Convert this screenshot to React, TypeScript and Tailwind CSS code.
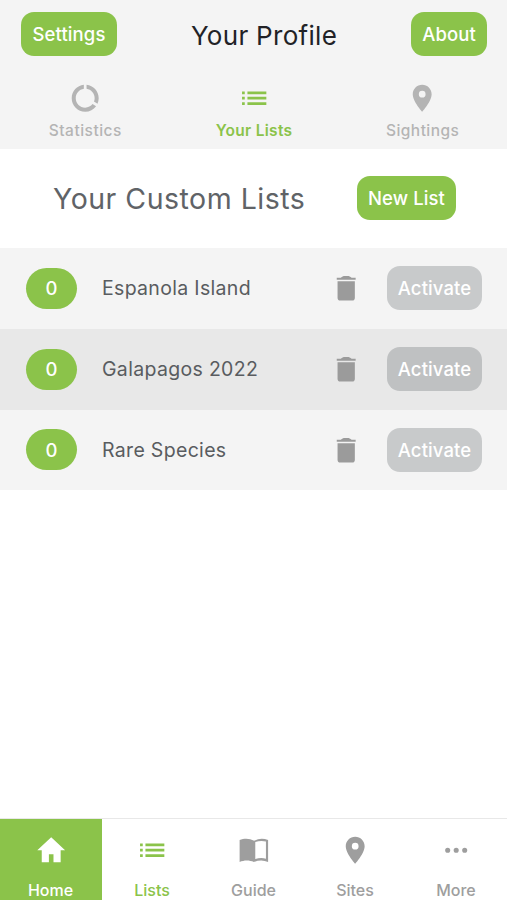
import React from "react";

const paths = {
  usage:
    "M13 2.05v3.03c3.39.49 6 3.39 6 6.92 0 .9-.18 1.75-.48 2.54l2.6 1.53c.56-1.24.88-2.62.88-4.07 0-5.18-3.95-9.45-9-9.95zM12 19c-3.87 0-7-3.13-7-7 0-3.53 2.61-6.43 6-6.92V2.05c-5.06.5-9 4.76-9 9.95 0 5.52 4.47 10 9.99 10 3.31 0 6.24-1.61 8.06-4.09l-2.6-1.53C16.17 17.98 14.21 19 12 19z",
  list: "M3 13h2v-2H3v2zm0 4h2v-2H3v2zm0-8h2V7H3v2zm4 4h14v-2H7v2zm0 4h14v-2H7v2zM7 7v2h14V7H7z",
  pin: "M12 2C8.13 2 5 5.13 5 9c0 5.25 7 13 7 13s7-7.75 7-13c0-3.87-3.13-7-7-7zm0 9.5a2.5 2.5 0 0 1 0-5 2.5 2.5 0 0 1 0 5z",
  trash: "M5.6 19.2c0 1.2.8 2 2 2h8.8c1.200 0 2-.8 2-2V6.800H5.600zM19 4.200h-3C15 3.400 14.200 3 13 3h-2c-1.200 0-2 .4-3 1.200H5v1.600h14z",
  home: "M10.300 21v-6h3.400v6H19v-9h3.300L12 2.500 1.700 12H5v9z",
  book: "M12 5C8.500 3 4.500 3 1.200 4.500V20.800C4.500 19.300 8.500 19.300 11.800 20.800C15.500 19.300 19 19.300 22.300 20.800V4.500C19 3 15.500 3 12 5zM12.800 6C15.500 4.900 18.500 4.900 20.700 5.600V18.400C18.500 17.600 15.500 17.700 12.800 18.600z",
  more: "M5.700 10.100a1.900 1.900 0 1 0 0 3.800 1.900 1.900 0 0 0 0-3.800zm6.300 0a1.900 1.900 0 1 0 0 3.800 1.900 1.900 0 0 0 0-3.800zm6.300 0a1.900 1.900 0 1 0 0 3.800 1.900 1.900 0 0 0 0-3.800z",
};

type IconName = keyof typeof paths;

function Icon({ name }: { name: IconName }) {
  return (
    <svg viewBox="0 0 24 24" className="size-[32.4px] shrink-0" fill="currentColor" fillRule="evenodd">
      <path d={paths[name]} />
    </svg>
  );
}

function Button({ children, className }: { children: string; className: string }) {
  return (
    <button
      className={`flex h-11 shrink-0 items-center justify-center rounded-[13px] pt-px text-[18.500px] font-medium tracking-[0.1px] whitespace-nowrap text-white ${className}`}
    >
      {children}
    </button>
  );
}

const tabs: { label: string; icon: IconName; style: string }[] = [
  { label: "Statistics", icon: "usage", style: "text-[#b4b4b4] tracking-[0.5px]" },
  { label: "Your Lists", icon: "list", style: "text-[#8bc34a] font-semibold tracking-[0.3px]" },
  { label: "Sightings", icon: "pin", style: "text-[#b4b4b4] tracking-[0.45px]" },
];

const lists = [
  { name: "Espanola Island", row: "bg-[#f4f4f4]", button: "bg-[#c8cacb]" },
  { name: "Galapagos 2022", row: "bg-[#e8e8e8]", button: "bg-[#bfc1c2]" },
  { name: "Rare Species", row: "bg-[#f4f4f4]", button: "bg-[#c8cacb]" },
];

const nav: { label: string; icon: IconName; style: string }[] = [
  { label: "Home", icon: "home", style: "bg-[#8bc34a] text-white" },
  { label: "Lists", icon: "list", style: "text-[#8bc34a]" },
  { label: "Guide", icon: "book", style: "text-[#9e9e9e]" },
  { label: "Sites", icon: "pin", style: "text-[#9e9e9e]" },
  { label: "More", icon: "more", style: "text-[#9e9e9e]" },
];

export default function App() {
  return (
    <div className="flex h-[900px] w-[507px] flex-col overflow-hidden bg-white font-['Inter',sans-serif]">
      <header className="h-[149px] shrink-0 bg-[#f4f4f4]">
        <div className="flex h-[69px] items-center justify-between pr-[20px] pb-px pl-[21px]">
          <Button className="w-24 bg-[#8bc34a]">Settings</Button>
          <h1 className="pt-[2px] text-[26px] tracking-[0.3px] text-[#222226]">Your Profile</h1>
          <Button className="w-[76px] bg-[#8bc34a]">About</Button>
        </div>
        <div className="grid h-20 grid-cols-3 pl-px">
          {tabs.map((t) => (
            <div key={t.label} className={`flex flex-col items-center pt-[13px] text-[15.500px] font-medium ${t.style}`}>
              <Icon name={t.icon} />
              <span className="mt-[5px] leading-6">{t.label}</span>
            </div>
          ))}
        </div>
      </header>
      <section className="flex h-[99px] shrink-0 items-center justify-between pr-[51px] pb-px pl-[53px]">
        <h2 className="pt-[3px] text-[28.500px] tracking-[0.5px] whitespace-nowrap text-[#606367]">Your Custom Lists</h2>
        <Button className="w-[99px] bg-[#8bc34a]">New List</Button>
      </section>
      <main className="flex-1">
        {lists.map((l) => (
          <div key={l.name} className={`flex h-[80.800px] items-center pr-[25px] pl-[26px] ${l.row}`}>
            <span className="flex h-[41px] w-[51px] items-center justify-center rounded-full bg-[#8bc34a] pt-px text-[18.500px] font-medium text-white">
              0
            </span>
            <span className="ml-[25px] flex-1 pt-px text-[19.500px] tracking-[0.32px] text-[#595c60]">{l.name}</span>
            <span className="mr-[25px] text-[#9b9b9b]">
              <Icon name="trash" />
            </span>
            <Button className={`w-[95px] ${l.button}`}>Activate</Button>
          </div>
        ))}
      </main>
      <nav className="grid h-[81px] shrink-0 grid-cols-[102px_101px_102px_101px_101px] shadow-[0_-1px_0_#e8e8e8]">
        {nav.map((n) => (
          <div key={n.label} className={`flex flex-col items-center pt-[15px] text-[16px] font-medium ${n.style}`}>
            <Icon name={n.icon} />
            <span className="mt-[12px] mr-px leading-6">{n.label}</span>
          </div>
        ))}
      </nav>
    </div>
  );
}
